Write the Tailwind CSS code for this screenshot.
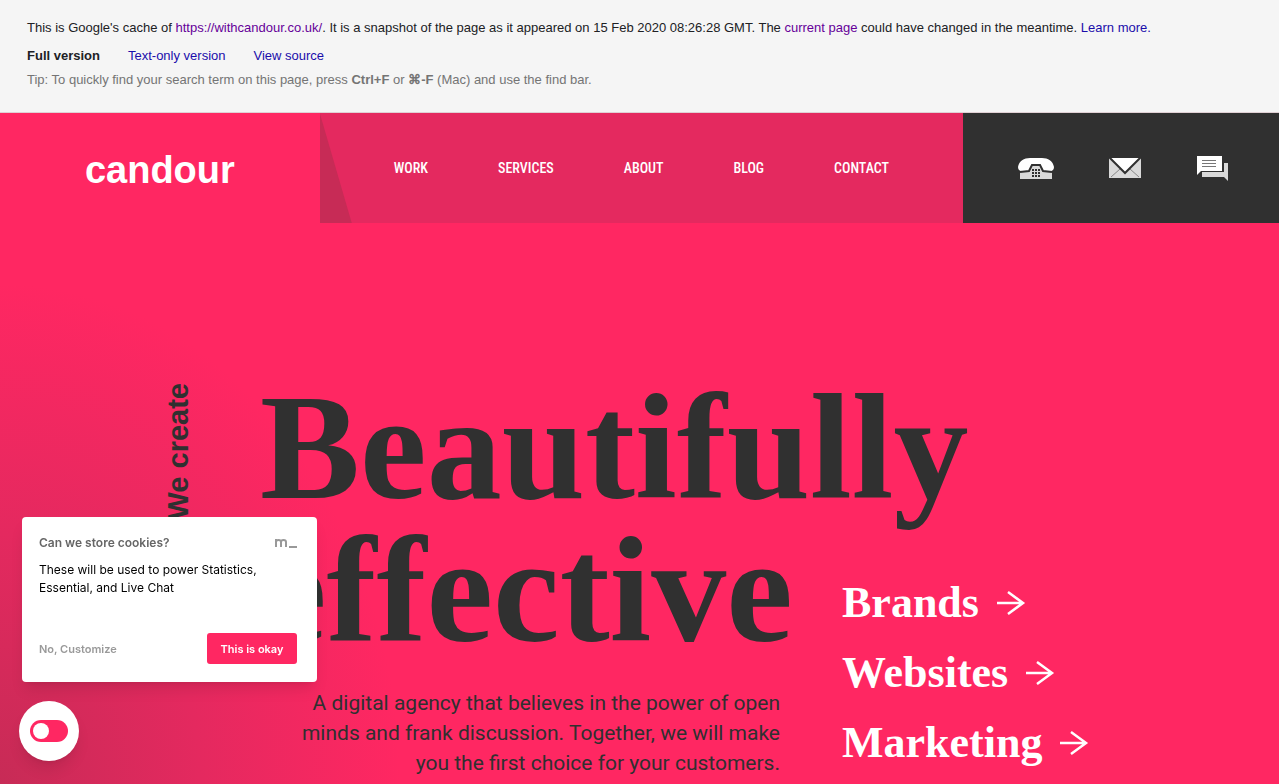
<!DOCTYPE html>
<html lang="en">
<head>
  <meta charset="UTF-8" />
  <meta name="viewport" content="width=device-width, initial-scale=1.0"/>
  <title>Candour</title>
  <script src="https://cdn.jsdelivr.net/npm/@tailwindcss/browser@4"></script>
</head>
<body class="min-h-screen flex flex-col overflow-x-hidden bg-[#ff2762] font-['Liberation_Sans',Arial,sans-serif]">

  <!-- Cache notice -->
  <div class="h-[113px] shrink-0 px-[27px] pt-5 bg-[#f5f5f5] border-b border-[#e0d0d4] text-[13px] leading-4 text-[#202124]">
    <p>This is Google's cache of <a href="#" class="text-[#609]">https://withcandour.co.uk/</a>. It is a snapshot of the page as it appeared on 15 Feb 2020 08:26:28 GMT. The <a href="#" class="text-[#609]">current page</a> could have changed in the meantime. <a href="#" class="text-[#1a0dab]">Learn more.</a></p>
    <div class="flex gap-7 mt-3">
      <span class="font-bold">Full version</span>
      <a href="#" class="text-[#1a0dab]">Text-only version</a>
      <a href="#" class="text-[#1a0dab]">View source</a>
    </div>
    <p class="mt-2 text-[#747474]">Tip: To quickly find your search term on this page, press <b>Ctrl+F</b> or <b>⌘-F</b> (Mac) and use the find bar.</p>
  </div>

  <!-- Header -->
  <header class="flex h-[110px] shrink-0">
    <a href="#" class="w-1/4 pt-1 flex items-center justify-center font-bold text-[38px] leading-none text-white">candour</a>
    <nav class="flex-1 flex bg-[#e4295f]">
      <div class="w-8 bg-[#c72b56] [clip-path:polygon(0_0,100%_100%,0_100%)]"></div>
      <div class="flex-1 flex items-center justify-between pl-[42px] pr-[74px] font-['Roboto_Condensed','Roboto',sans-serif] font-medium text-[14px] text-white">
        <a href="#">WORK</a>
        <a href="#">SERVICES</a>
        <a href="#">ABOUT</a>
        <a href="#">BLOG</a>
        <a href="#">CONTACT</a>
      </div>
    </nav>
    <div class="w-[316px] flex items-center justify-between pl-[55px] pr-[51px] bg-[#303030]">
      <a href="#" aria-label="Phone">
        <svg width="36" height="26" viewBox="0 0 36 26">
          <path fill="#d9d9d9" d="M2 15h9l3-4h8l3 4h9v9H2z"/>
          <path fill="#fff" d="M0 12C1 6 6 3 12 3h12c6 0 11 3 12 9 0 3-2 4-4 4h-7l-3-6h-8l-3 6H4c-2 0-4-1-4-4z"/>
          <path fill="none" stroke="#303030" stroke-width="2" d="M2 17l9-1 3-6h8l3 6 9 1"/>
          <path fill="#303030" d="M14 14h2v2h-2zM17 14h2v2h-2zM20 14h2v2h-2zM14 17h2v2h-2zM17 17h2v2h-2zM20 17h2v2h-2zM14 20h2v2h-2zM17 20h2v2h-2zM20 20h2v2h-2z"/>
        </svg>
      </a>
      <a href="#" aria-label="Email">
        <svg width="32" height="22" viewBox="0 0 32 22">
          <path fill="#d9d9d9" d="M0 1h32v20H0z"/>
          <path fill="none" stroke="#888" d="M2 20l9-8M30 20l-9-8"/>
          <path fill="#fff" stroke="#303030" stroke-width="2" d="M0 0l16 16L32 0"/>
          <path fill="#303030" d="M0 0h32v1H0z"/>
        </svg>
      </a>
      <a href="#" aria-label="Chat">
        <svg width="32" height="26" viewBox="0 0 32 26">
          <path fill="#d9d9d9" d="M28 8h4v18l-4-4H6v-5h22z"/>
          <path fill="#fff" d="M1 1h25v15H5l-4 4z"/>
          <path stroke="#777" d="M6 5.500h14M6 8.500h14M6 11.500h14"/>
        </svg>
      </a>
    </div>
  </header>

  <!-- Hero -->
  <main class="flex-1 flex pt-[153px] pl-[162px] text-[#303030] bg-[radial-gradient(ellipse_400px_500px_at_0%_100%,#c72b56_0%,#e4295f_50%,#ff2762_100%)]">
    <p class="w-[98px] pt-[7px] flex items-start text-[29px] leading-8 font-bold"><span class="[writing-mode:vertical-rl] rotate-180 whitespace-nowrap">We create</span></p>
    <div class="w-[520px] shrink-0">
      <h1 class="font-['Liberation_Serif',serif] font-bold text-[150px] leading-[143px]">Beautifully effective</h1>
      <p class="mt-[26px] pl-10 text-right font-['Roboto',sans-serif] text-[21px] leading-[30px]">A digital agency that believes in the power of open minds and frank discussion. Together, we will make you the first choice for your customers.</p>
    </div>
    <ul class="ml-[62px] self-end pb-[6px] font-['Liberation_Serif',serif] font-bold text-[44px] leading-[70px] text-white">
      <li><a href="#" class="flex items-center gap-[18px]">Brands
        <svg width="29" height="26" viewBox="0 0 29 26" fill="none" stroke="currentColor" stroke-width="2.500"><path d="M0 13h26M11 2l15 11-15 11"/></svg></a></li>
      <li><a href="#" class="flex items-center gap-[18px]">Websites
        <svg width="29" height="26" viewBox="0 0 29 26" fill="none" stroke="currentColor" stroke-width="2.500"><path d="M0 13h26M11 2l15 11-15 11"/></svg></a></li>
      <li><a href="#" class="flex items-center gap-[18px]">Marketing
        <svg width="29" height="26" viewBox="0 0 29 26" fill="none" stroke="currentColor" stroke-width="2.500"><path d="M0 13h26M11 2l15 11-15 11"/></svg></a></li>
    </ul>
  </main>

  <!-- Cookie prompt -->
  <div class="fixed left-[22px] bottom-[102px] w-[295px] h-[165px] flex flex-col pl-[17px] pr-5 pt-[17px] pb-[18px] rounded bg-white shadow-lg font-['Inter',sans-serif] text-[12px] leading-[18px]">
    <div class="flex items-center justify-between">
      <h2 class="font-semibold text-[#666]">Can we store cookies?</h2>
      <svg width="23" height="12" viewBox="0 0 23 12" fill="none" stroke="#999" stroke-width="2"><path d="M2 10V2M2 5q0-2 2.500-2t2.500 2v5M7 5q0-2 2.500-2t2.500 2v5M15 10h8"/></svg>
    </div>
    <p class="mt-[9px] text-black">These will be used to power Statistics, Essential, and Live Chat</p>
    <div class="mt-auto flex items-center justify-between text-[11px] font-semibold">
      <button class="text-[#999]">No, Customize</button>
      <button class="w-[90px] h-[31px] rounded-[3px] bg-[#ff2762] text-white">This is okay</button>
    </div>
  </div>

  <button aria-label="Cookie settings" class="fixed left-[19px] bottom-[23px] size-[60px] flex items-center justify-center rounded-full bg-white shadow-lg">
    <span class="w-[38px] h-[22px] p-[3px] rounded-full bg-[#ff2762]"><span class="block size-4 rounded-full bg-white"></span></span>
  </button>

</body>
</html>
